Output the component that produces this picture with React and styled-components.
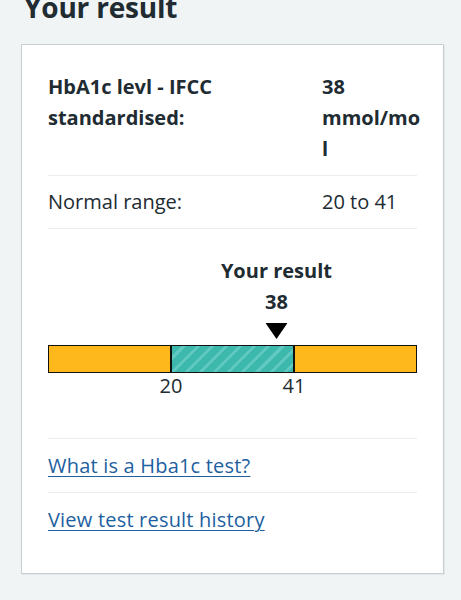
import React from 'react'
import styled, { createGlobalStyle } from 'styled-components'

const GlobalStyle = createGlobalStyle`
  html, body {
    margin: 0;
    padding: 0;
    background: #f0f4f5;
  }
  body {
    font-family: "Open Sans", "Liberation Sans", sans-serif;
    color: #212b32;
    overflow: hidden;
  }
`

const Page = styled.main`
  padding: 0 17px 40px 21px;
`

const Heading = styled.h2`
  font-size: 28px;
  font-weight: 700;
  line-height: 36px;
  margin: -11px 0 0 3px;
  padding-bottom: 19px;
  letter-spacing: -0.2px;
`

const Card = styled.section`
  background: #fff;
  border: 1px solid #c8cfd3;
  box-shadow: 1px 1px 0 #e2e6e8;
  padding: 16px 26px 27px;
`

const SummaryRow = styled.div`
  display: grid;
  grid-template-columns: 263px 99px;
  column-gap: 11px;
  padding: 10px 0 11px;
  border-bottom: 1px solid #e8edee;
  font-size: 20px;
  line-height: 31px;
  font-weight: ${p => (p.$bold ? 700 : 400)};
`

const Label = styled.div`
  max-width: 200px;
`

const Value = styled.div``

const Unit = styled.span`
  display: inline-block;
  max-width: 100%;
  word-break: break-all;
`

const Chart = styled.div`
  padding: 26px 0 39px;
  border-bottom: 1px solid #e8edee;
`

const MarkerTrack = styled.div`
  display: block;
`

const Marker = styled.div`
  display: inline-flex;
  flex-direction: column;
  align-items: center;
  transform: translateX(-50%);
  font-size: 20px;
  font-weight: 700;
  line-height: 31px;
  white-space: nowrap;
`

const Pointer = styled.svg`
  display: block;
  margin: 6px 0 6px;
`

const Bar = styled.div`
  display: flex;
  height: 26px;
  border: 1px solid #111;
`

const Segment = styled.div`
  flex: 1;
  background: ${p =>
    p.$normal
      ? 'repeating-linear-gradient(135deg, #3db8ac 0 7px, #5fc9bf 7px 10px)'
      : '#ffb81c'};
  border-left: ${p => (p.$normal ? '2px solid #111' : 'none')};
  border-right: ${p => (p.$normal ? '2px solid #111' : 'none')};
`

const Scale = styled.div`
  display: flex;
  font-size: 20px;
  line-height: 26px;
`

const Spacer = styled.div`
  flex: 1;
`

const Tick = styled.div`
  width: 0;
  display: flex;
  justify-content: center;
  white-space: nowrap;
`

const LinkRow = styled.div`
  padding: 11px 0;
  font-size: 20px;
  line-height: 31px;
  letter-spacing: 0.2px;
  border-bottom: ${p => (p.$last ? 'none' : '1px solid #e8edee')};
`

const Link = styled.a`
  color: #1d5fa0;
  text-decoration: underline;
  text-underline-offset: 3px;
  text-decoration-thickness: 1px;
`

const low = 20
const high = 41
const result = 38

// position of the result on a bar split in three equal parts
function markerPercent(v) {
  const third = 100 / 3
  if (v < low) return Math.max(0, (v / low) * third)
  if (v > high) return Math.min(100, 2 * third + ((v - high) / high) * third)
  return third + ((v - low) / (high - low)) * third
}

export default function App() {
  return (
    <Page>
      <GlobalStyle />
      <Heading>Your result</Heading>
      <Card>
        <SummaryRow $bold>
          <Label>HbA1c levl - IFCC standardised:</Label>
          <Value>
            {result} <Unit>mmol/mol</Unit>
          </Value>
        </SummaryRow>
        <SummaryRow>
          <Label>Normal range:</Label>
          <Value>{low} to {high}</Value>
        </SummaryRow>

        <Chart>
          <MarkerTrack>
            <Marker style={{ marginLeft: `${markerPercent(result)}%` }}>
              <span>Your result</span>
              <span>{result}</span>
              <Pointer width="22" height="16" viewBox="0 0 22 16">
                <polygon points="0,0 22,0 11,16" fill="#000" />
              </Pointer>
            </Marker>
          </MarkerTrack>
          <Bar>
            <Segment />
            <Segment $normal />
            <Segment />
          </Bar>
          <Scale>
            <Spacer />
            <Tick>{low}</Tick>
            <Spacer />
            <Tick>{high}</Tick>
            <Spacer />
          </Scale>
        </Chart>

        <LinkRow>
          <Link href="#">What is a Hba1c test?</Link>
        </LinkRow>
        <LinkRow $last>
          <Link href="#">View test result history</Link>
        </LinkRow>
      </Card>
    </Page>
  )
}
